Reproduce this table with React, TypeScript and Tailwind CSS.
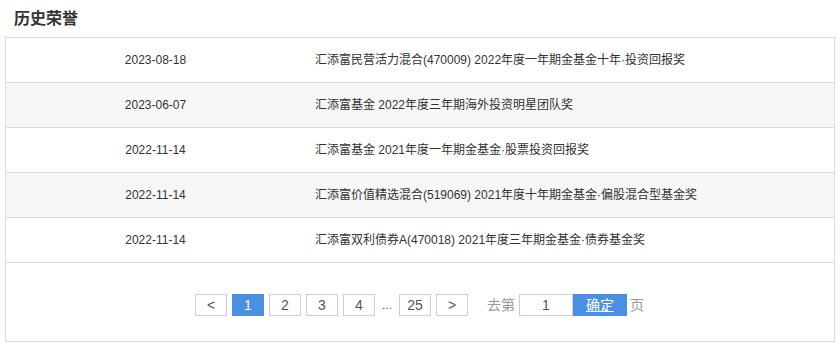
import React from "react";

const honors = [
  { date: "2023-08-18", title: "汇添富民营活力混合(470009) 2022年度一年期金基金十年·投资回报奖" },
  { date: "2023-06-07", title: "汇添富基金 2022年度三年期海外投资明星团队奖" },
  { date: "2022-11-14", title: "汇添富基金 2021年度一年期金基金·股票投资回报奖" },
  { date: "2022-11-14", title: "汇添富价值精选混合(519069) 2021年度十年期金基金·偏股混合型基金奖" },
  { date: "2022-11-14", title: "汇添富双利债券A(470018) 2021年度三年期金基金·债券基金奖" },
];

const font = { fontFamily: '"Liberation Sans", Arial, "Noto Sans CJK SC", sans-serif' };

const PageBtn = ({ children, active }: { children: React.ReactNode; active?: boolean }) => (
  <div
    className={
      active
        ? "w-8 h-[22px] flex items-center justify-center border border-[#4a90e2] bg-[#4a90e2] text-white text-sm"
        : "w-8 h-[22px] flex items-center justify-center border border-[#d0d0d0] bg-white text-[#555] text-sm"
    }
  >
    {children}
  </div>
);

export default function App() {
  return (
    <div className="w-[838px] h-[345px] bg-white text-[#333]" style={font}>
      <h2 className="pl-[14px] pt-[7px] h-[37px] text-base font-bold leading-6">历史荣誉</h2>
      <div className="ml-[5px] w-[830px] h-[305px] border border-[#dcdcdc] flex flex-col">
        {honors.map((h, i) => (
          <div
            key={i}
            className={
              "flex items-center h-[45px] border-b border-[#dcdcdc] text-xs " +
              (i % 2 === 1 ? "bg-[#f7f7f7]" : "bg-white")
            }
          >
            <div className="w-[299px] text-center">{h.date}</div>
            <div className="pl-[10px]">{h.title}</div>
          </div>
        ))}
        <div className="flex-1 flex items-center pl-[189px] pt-[6px]">
          <div className="flex items-center gap-[5px]">
            <PageBtn>&lt;</PageBtn>
            <PageBtn active>1</PageBtn>
            <PageBtn>2</PageBtn>
            <PageBtn>3</PageBtn>
            <PageBtn>4</PageBtn>
            <span className="w-[14px] text-center text-xs text-[#555]">...</span>
            <PageBtn>25</PageBtn>
            <PageBtn>&gt;</PageBtn>
          </div>
          <span className="ml-[19px] text-sm text-[#999]">去第</span>
          <div className="ml-[4px] w-[54px] h-[22px] border border-[#d0d0d0] flex items-center justify-center text-sm text-[#555]">
            1
          </div>
          <div className="w-[54px] h-[22px] bg-[#4a90e2] text-white text-sm flex items-center justify-center underline">
            确定
          </div>
          <span className="ml-[3px] text-sm text-[#999]">页</span>
        </div>
      </div>
    </div>
  );
}
